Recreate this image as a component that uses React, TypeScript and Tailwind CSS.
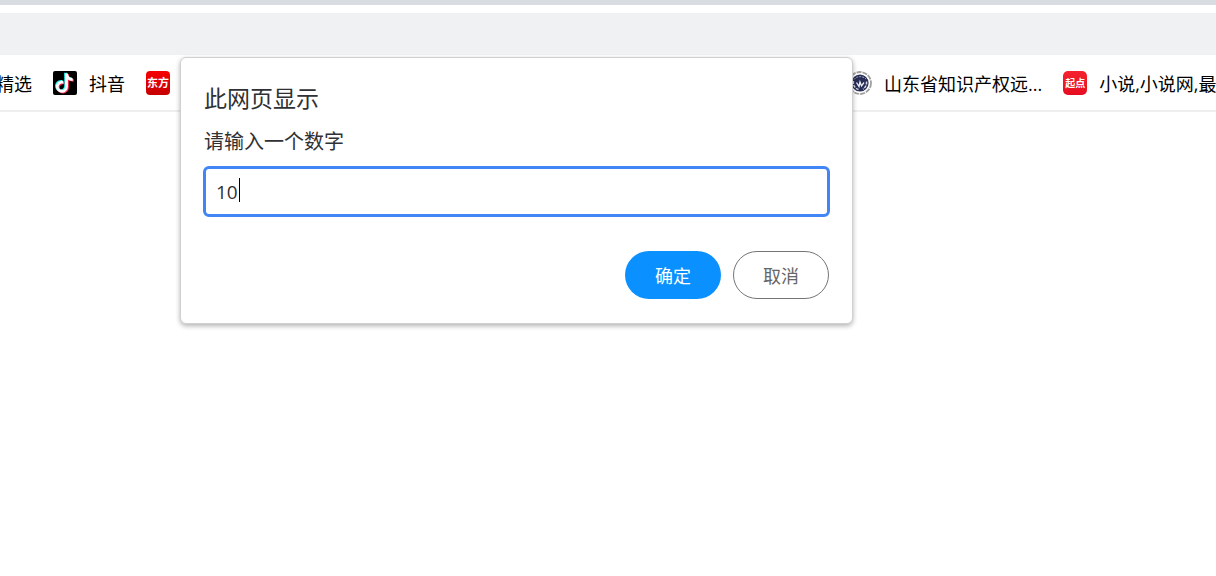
import React, { useState } from 'react';

const DouyinIcon = () => (
  <svg className="w-6 h-6 shrink-0" viewBox="0 0 24 24" aria-hidden="true">
    <rect width="24" height="24" rx="2" fill="#000" />
    <g fill="none" strokeWidth="2.800">
      <g stroke="#25f4ee" transform="translate(-0.900 -0.700)">
        <path d="M13.500 2.500v13a4.600 4.600 0 1 1-4.600-4.400h1.400" />
        <path d="M13.500 3c.4 3.400 2.700 5.500 6.200 5.600" />
      </g>
      <g stroke="#fe2c55" transform="translate(1 0.800)">
        <path d="M13.500 2.500v13a4.600 4.600 0 1 1-4.600-4.400h1.400" />
        <path d="M13.500 3c.4 3.400 2.700 5.500 6.200 5.600" />
      </g>
      <g stroke="#fff">
        <path d="M13.500 2.500v13a4.600 4.600 0 1 1-4.600-4.400h1.400" />
        <path d="M13.500 3c.4 3.400 2.700 5.500 6.200 5.600" />
      </g>
    </g>
  </svg>
);

const EmblemIcon = () => (
  <svg className="w-6 h-6 shrink-0" viewBox="0 0 24 24" aria-hidden="true">
    <circle cx="12" cy="12" r="11" fill="none" stroke="#a0a0a0" strokeWidth="1.800" strokeDasharray="5 1" />
    <circle cx="12" cy="12" r="8.600" fill="#272d55" />
    <path d="M6 8.500c2.500-3.500 8.500-4 12-.5" fill="none" stroke="#9da2bb" strokeWidth="1" strokeDasharray="2 1" />
    <path d="M5.500 10c-.8 4 1.500 7.500 5 8.500M18.500 10.500c.5 3-1 6-3.500 7.500" fill="none" stroke="#d5d8e4" strokeWidth="1.500" strokeDasharray="3 1" />
    <path d="M8.500 11.500l2.500 4 1-4.500 1.500 4 2.500-3.500" fill="none" stroke="#eef0f6" strokeWidth="1.300" />
  </svg>
);

const DongfangIcon = () => (
  <span className="flex w-6 h-6 shrink-0 items-center justify-center rounded-[4px] bg-linear-to-b from-[#f80000] to-[#c60000] text-[11px] leading-none font-bold text-white">
    东方
  </span>
);

const QidianIcon = () => (
  <span className="flex w-6 h-6 shrink-0 items-center justify-center rounded-[5px] bg-linear-to-b from-[#f5222f] to-[#e60c20] text-[10px] leading-none font-bold text-white">
    起点
  </span>
);

const Bookmark = ({ icon, label }: { icon?: React.ReactNode; label?: string }) => (
  <a href="#" className="flex shrink-0 items-center gap-3 whitespace-nowrap">
    {icon}
    {label && <span className="pt-[3px]">{label}</span>}
  </a>
);

const PromptDialog = () => {
  const [value, setValue] = useState('10');

  return (
    <form
      role="dialog"
      aria-labelledby="prompt-title"
      onSubmit={(e) => e.preventDefault()}
      className="absolute top-[57px] left-[180px] w-[673px] rounded-[6px] border border-[#d0d0d0] bg-white px-[22px] pt-6 pb-6 text-[#303134] shadow-[0_2px_5px_rgba(0,0,0,0.3)]"
    >
      <h1 id="prompt-title" className="px-px text-[23px] leading-8">此网页显示</h1>
      <label htmlFor="prompt-value" className="mt-3 block px-px text-[20px] leading-8">请输入一个数字</label>
      <div className="relative mt-2">
        <input
          id="prompt-value"
          type="text"
          value={value}
          onChange={(e) => setValue(e.target.value)}
          className="block h-[51px] w-full rounded-[6px] border-3 border-[#4285f4] bg-white px-[10px] text-[19px] caret-transparent outline-none"
        />
        <span className="pointer-events-none absolute top-3 left-9 h-6 w-px bg-black" />
      </div>
      <div className="mt-[34px] flex justify-end gap-3 px-px">
        <button type="submit" className="h-12 w-24 rounded-full bg-[#0a91ff] pt-[2px] text-[18px] text-white">确定</button>
        <button type="button" className="h-12 w-24 rounded-full border border-[#757575] bg-white pt-[2px] text-[18px] text-[#666]">取消</button>
      </div>
    </form>
  );
};

export default function App() {
  return (
    <div className="relative min-h-screen overflow-hidden bg-white font-['Open_Sans','Noto_Sans_CJK_SC',sans-serif]">
      <div className="h-[5px] bg-[#d9dce1]" />
      <div className="mt-2 h-[42px] bg-[#f0f1f3]" />
      <nav className="flex h-[57px] items-center overflow-hidden border-b-2 border-[#eeeeef] text-[18px] text-black">
        <div className="-ml-1 flex w-[852px] shrink-0 items-center gap-[21px]">
          <Bookmark label="精选" />
          <Bookmark icon={<DouyinIcon />} label="抖音" />
          <Bookmark icon={<DongfangIcon />} />
        </div>
        <div className="flex items-center gap-[21px]">
          <Bookmark icon={<EmblemIcon />} label="山东省知识产权远..." />
          <Bookmark icon={<QidianIcon />} label="小说,小说网,最" />
        </div>
      </nav>
      <PromptDialog />
    </div>
  );
}
